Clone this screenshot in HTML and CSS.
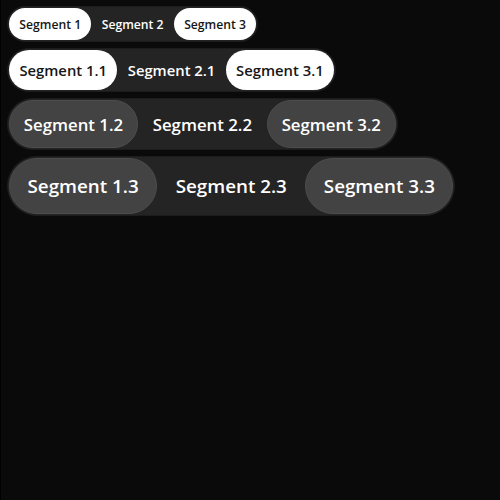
FILE: index.html
```html
<!DOCTYPE html>
<html>
<head>
<meta charset="utf-8">
<link rel="stylesheet" href="styles.css">
</head>
<body>
<div class="stack">
  <div class="seg seg-xs light">
    <span class="item on">Segment 1</span>
    <span class="item">Segment 2</span>
    <span class="item on">Segment 3</span>
  </div>
  <div class="seg seg-sm light">
    <span class="item on">Segment 1.1</span>
    <span class="item">Segment 2.1</span>
    <span class="item on">Segment 3.1</span>
  </div>
  <div class="seg seg-md dark">
    <span class="item on">Segment 1.2</span>
    <span class="item">Segment 2.2</span>
    <span class="item on">Segment 3.2</span>
  </div>
  <div class="seg seg-lg dark">
    <span class="item on">Segment 1.3</span>
    <span class="item">Segment 2.3</span>
    <span class="item on">Segment 3.3</span>
  </div>
</div>
</body>
</html>
```
FILE: styles.css
```css
html {
  background: #000;
}
body {
  margin: 0 0 0 1px;
  min-height: 100vh;
  background: #0a0a0a;
  font-family: "Open Sans", sans-serif;
  font-weight: 600;
  color: #fff;
}
.stack {
  padding: 6px 0 0 6px;
  display: flex;
  flex-direction: column;
  align-items: flex-start;
  gap: 6px;
}
.seg {
  display: grid;
  grid-auto-flow: column;
  grid-auto-columns: 1fr;
  padding: 1px;
  border: 1px solid #1c1c1c;
  background: #242424;
  border-radius: 999px;
}
.item {
  display: flex;
  align-items: center;
  justify-content: center;
  border-radius: 999px;
  border: 1px solid transparent;
  white-space: nowrap;
}
.light .item.on {
  background: #fff;
  color: #161616;
}
.dark .item.on {
  background: #434343;
  border-color: #4c4c4c;
}
.seg-xs .item {
  height: 30px;
  padding: 0 9.3px;
  font-size: 12.2px;
}
.seg-sm .item {
  height: 38px;
  padding: 0 9.4px;
  font-size: 14.8px;
}
.seg-md .item {
  height: 46px;
  padding: 0 13.8px;
  font-size: 16.8px;
}
.seg-lg .item {
  height: 54px;
  padding: 0 17.5px;
  font-size: 18.8px;
}
```
